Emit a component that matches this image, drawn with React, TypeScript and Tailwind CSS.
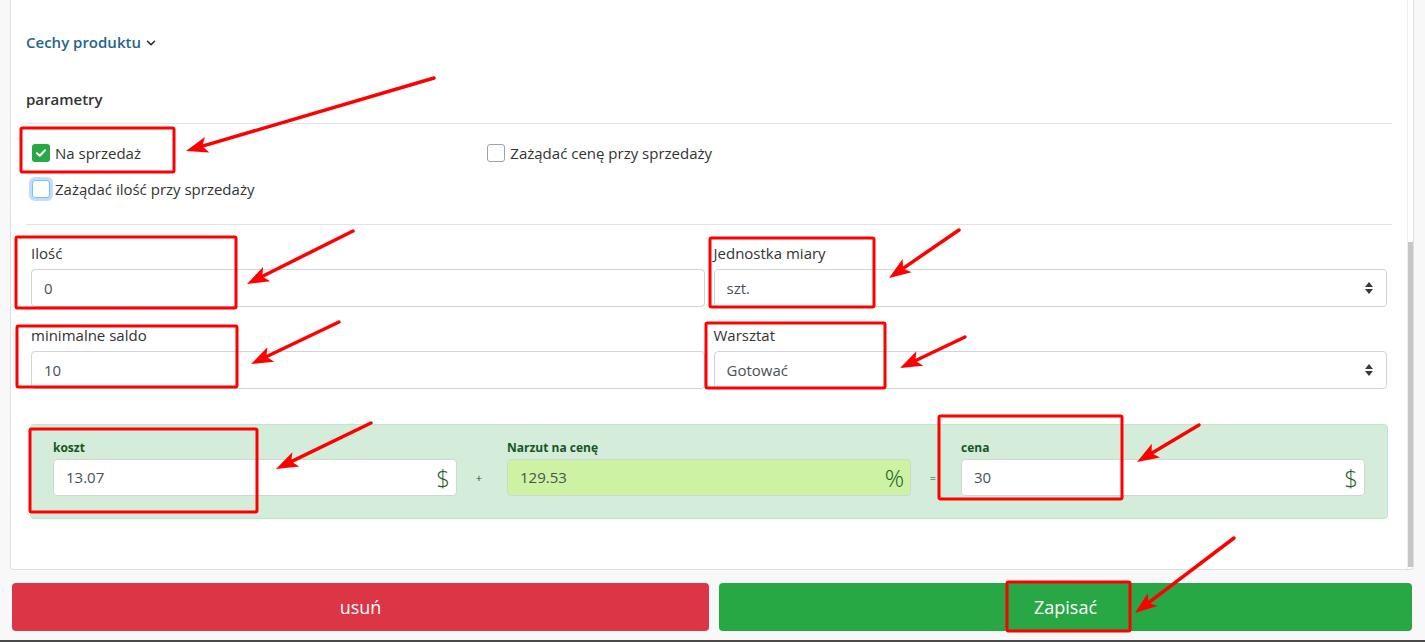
import { ChevronDown } from "lucide-react"

const font = { fontFamily: '"Open Sans", "Noto Sans", sans-serif' }

// red annotation boxes drawn over the screenshot
const boxes = [
  { x: 21, y: 128, w: 153, h: 44 },
  { x: 16, y: 237, w: 220, h: 71 },
  { x: 17, y: 326, w: 220, h: 61 },
  { x: 710, y: 238, w: 164, h: 69 },
  { x: 706, y: 323, w: 179, h: 65 },
  { x: 30, y: 429, w: 227, h: 83 },
  { x: 939, y: 416, w: 183, h: 83 },
  { x: 1007, y: 582, w: 123, h: 49 },
]

const arrows = [
  { x1: 434, y1: 78, x2: 186, y2: 151 },
  { x1: 353, y1: 231, x2: 247, y2: 284 },
  { x1: 339, y1: 322, x2: 251, y2: 364 },
  { x1: 959, y1: 230, x2: 889, y2: 278 },
  { x1: 965, y1: 337, x2: 900, y2: 368 },
  { x1: 371, y1: 423, x2: 276, y2: 469 },
  { x1: 1199, y1: 425, x2: 1137, y2: 462 },
  { x1: 1234, y1: 538, x2: 1135, y2: 613 },
]

const Arrow = ({ x1, y1, x2, y2 }: { x1: number; y1: number; x2: number; y2: number }) => {
  const len = Math.hypot(x2 - x1, y2 - y1)
  const ux = (x2 - x1) / len
  const uy = (y2 - y1) / len
  const hl = 22
  const hw = 8
  const bx = x2 - ux * hl
  const by = y2 - uy * hl
  const pts = `${x2},${y2} ${bx - uy * hw},${by + ux * hw} ${bx + ux * 5},${by + uy * 5} ${bx + uy * hw},${by - ux * hw}`
  return (
    <g>
      <line x1={x1} y1={y1} x2={bx + ux * 4} y2={by + uy * 4} stroke="#ff0000" strokeWidth={3.5} strokeLinecap="round" />
      <polygon points={pts} fill="#ff0000" />
    </g>
  )
}

const Checkbox = ({ checked, focus }: { checked?: boolean; focus?: boolean }) => {
  if (checked) {
    return (
      <span className="flex h-[18px] w-[18px] items-center justify-center rounded-[3px] bg-[#28a745]">
        <svg width="10" height="8" viewBox="0 0 10 8">
          <path d="M1 4.2 L3.8 6.8 L9 1.2" stroke="white" strokeWidth="2" fill="none" strokeLinecap="round" strokeLinejoin="round" />
        </svg>
      </span>
    )
  }
  if (focus) {
    return (
      <span className="h-[18px] w-[18px] rounded-[3px] border border-[#80bdff] bg-white shadow-[0_0_0_3px_rgba(0,123,255,0.25)]" />
    )
  }
  return <span className="h-[18px] w-[18px] rounded-[3px] border border-[#9aa1a8] bg-white" />
}

const CheckItem = ({ label, checked, focus }: { label: string; checked?: boolean; focus?: boolean }) => (
  <label className="flex h-6 items-center gap-[5px] pl-[6px] text-[15px] text-[#333]">
    <Checkbox checked={checked} focus={focus} />
    <span>{label}</span>
  </label>
)

const Caret = () => (
  <svg width="8" height="12" viewBox="0 0 8 12">
    <path d="M4 0 L8 5 L0 5 Z" fill="#343a40" />
    <path d="M4 12 L8 7 L0 7 Z" fill="#343a40" />
  </svg>
)

const Field = ({ label, value, select }: { label: string; value: string; select?: boolean }) => (
  <div className="flex flex-col">
    <div className="h-[22px] text-[15px] leading-[22px] text-[#333]">{label}</div>
    <div className="mt-[5px] flex h-[38px] items-center justify-between rounded-[4px] border border-[#ced4da] bg-white pl-[12px] pr-[13px] text-[15px] text-[#495057]">
      <span>{value}</span>
      {select && <Caret />}
    </div>
  </div>
)

const PriceInput = ({ label, value, unit, tinted }: { label: string; value: string; unit: string; tinted?: boolean }) => (
  <div className="flex flex-1 flex-col">
    <div className="h-[18px] text-[12px] font-bold leading-[18px] text-[#155724]">{label}</div>
    <div
      className={`mt-[2px] flex h-[37px] items-center justify-between rounded-[4px] border border-[#cfd8cf] pl-[12px] pr-[6px] ${
        tinted ? "bg-[#cdf2a3]" : "bg-white"
      }`}
    >
      <span className="text-[15px] text-[#495057]">{value}</span>
      <span className="text-[24px] font-light leading-none text-[#17602b]">{unit}</span>
    </div>
  </div>
)

const Op = ({ sign }: { sign: string }) => (
  <div className="flex w-[50px] items-end justify-center pb-[10px] pr-[6px] text-[11px] text-[#155724]">{sign}</div>
)

export default function App() {
  return (
    <div className="relative h-[642px] w-[1425px] overflow-hidden bg-[#f8f8f8]" style={font}>
      {/* card */}
      <div className="ml-[10px] flex h-[570px] w-[1404px] rounded-b-[4px] border border-t-0 border-[#dedede] bg-white">
        <div className="flex-1 px-[15px]">
          <div className="mt-[31px] flex h-[22px] items-center gap-[3px] text-[15px] font-semibold text-[#24638f]">
            <span>Cechy produktu</span>
            <ChevronDown size={14} strokeWidth={2.5} className="mt-[2px] text-[#222]" />
          </div>

          <div className="mt-[35px] h-[22px] text-[15px] font-semibold leading-[22px] text-[#333]">parametry</div>
          <div className="mt-[13px] h-px bg-[#e3e3e3]" />

          <div className="mt-[17px] grid grid-cols-3 gap-y-[12px]">
            <CheckItem label="Na sprzedaż" checked />
            <CheckItem label="Zażądać cenę przy sprzedaży" />
            <div />
            <CheckItem label="Zażądać ilość przy sprzedaży" focus />
          </div>
          <div className="mt-[23px] h-px bg-[#e3e3e3]" />

          <div className="mt-[17px] grid grid-cols-2 gap-x-[9px] gap-y-[17px] px-[5px]">
            <Field label="Ilość" value="0" />
            <Field label="Jednostka miary" value="szt." select />
            <Field label="minimalne saldo" value="10" />
            <Field label="Warsztat" value="Gotować" select />
          </div>

          <div className="mx-[4px] mt-[35px] flex rounded-[4px] border border-[#c3e6cb] bg-[#d4edda] px-[22px] pb-[22px] pt-[14px]">
            <PriceInput label="koszt" value="13.07" unit="$" />
            <Op sign="+" />
            <PriceInput label="Narzut na cenę" value="129.53" unit="%" tinted />
            <Op sign="=" />
            <PriceInput label="cena" value="30" unit="$" />
          </div>
        </div>
        {/* scrollbar */}
        <div className="w-[6px] border-l border-[#eeeeee]">
          <div className="mt-[242px] h-[325px] bg-[#c6c6c6]" />
        </div>
      </div>

      {/* buttons */}
      <div className="mt-[13px] flex gap-[10px] pl-[12px] pr-[13px]">
        <button className="h-[48px] w-[697px] rounded-[4px] bg-[#dc3545] text-[18px] text-white">usuń</button>
        <button className="h-[48px] flex-1 rounded-[4px] bg-[#28a745] text-[18px] text-white">Zapisać</button>
      </div>
      <div className="mt-[9px] h-[2px] bg-[#4a4a4a]" />

      {/* annotations */}
      <svg className="pointer-events-none absolute inset-0" width="1425" height="642">
        {boxes.map((b, i) => (
          <rect key={i} x={b.x} y={b.y} width={b.w} height={b.h} rx={1.5} fill="none" stroke="#ff0000" strokeWidth={3} />
        ))}
        {arrows.map((a, i) => (
          <Arrow key={i} {...a} />
        ))}
      </svg>
    </div>
  )
}
